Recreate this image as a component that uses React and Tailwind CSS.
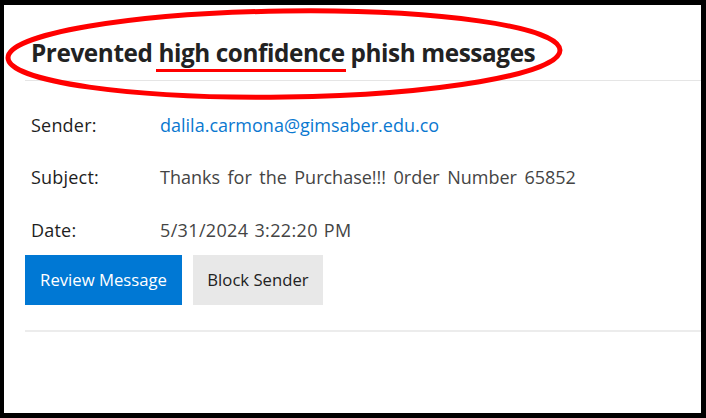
import React from "react";

export default function App() {
  const font = { fontFamily: '"Open Sans", "Noto Sans", sans-serif' };
  return (
    <div
      className="relative w-[706px] h-[418px] overflow-hidden bg-white border-solid border-black border-t-[5px] border-l-[4px] border-r-[5px] border-b-[5px]"
      style={font}
    >
      <div className="pl-[21px]">
        <div className="h-[76px] border-b border-[#e5e5e5] flex items-end pb-[12px] pl-[6px]">
          <h1 className="text-[24.3px] leading-[30px] font-bold text-[#222] tracking-[-0.4px]">
            Prevented high confidence phish messages
          </h1>
        </div>
        <div className="pl-[6px] pt-[31px] text-[18px] leading-[26px]">
          <div className="flex h-[52px]">
            <div className="w-[129px] text-[#1e1e1e] tracking-[0.2px]">Sender:</div>
            <div className="text-[#0a78d0]">dalila.carmona@gimsaber.edu.co</div>
          </div>
          <div className="flex h-[53px]">
            <div className="w-[129px] text-[#1e1e1e] tracking-[0.2px]">Subject:</div>
            <div className="text-[#444] [word-spacing:2.8px]">Thanks for the Purchase!!! 0rder Number 65852</div>
          </div>
          <div className="flex h-[37px]">
            <div className="w-[129px] text-[#1e1e1e] tracking-[0.2px]">Date:</div>
            <div className="text-[#444] tracking-[0.35px] [word-spacing:1px]">5/31/2024 3:22:20 PM</div>
          </div>
        </div>
        <div className="flex gap-[11px] mt-[1px]">
          <button className="h-[50px] w-[157px] bg-[#0078d4] text-white text-[16.7px]">Review Message</button>
          <button className="h-[50px] w-[130px] bg-[#e8e8e8] text-[#222] text-[16.7px]">Block Sender</button>
        </div>
        <div className="mt-[25px] border-b-2 border-[#ececec]" />
      </div>
      <svg
        className="absolute left-[-4px] top-[-5px] pointer-events-none"
        width="706"
        height="418"
        viewBox="0 0 706 418"
      >
        <ellipse
          cx="284"
          cy="54"
          rx="276"
          ry="43"
          fill="none"
          stroke="#ff0000"
          strokeWidth="5"
          transform="rotate(-0.8 284 54)"
        />
        <path d="M156 70.5 L346 70.5" stroke="#ff0000" strokeWidth="3" />
      </svg>
    </div>
  );
}
